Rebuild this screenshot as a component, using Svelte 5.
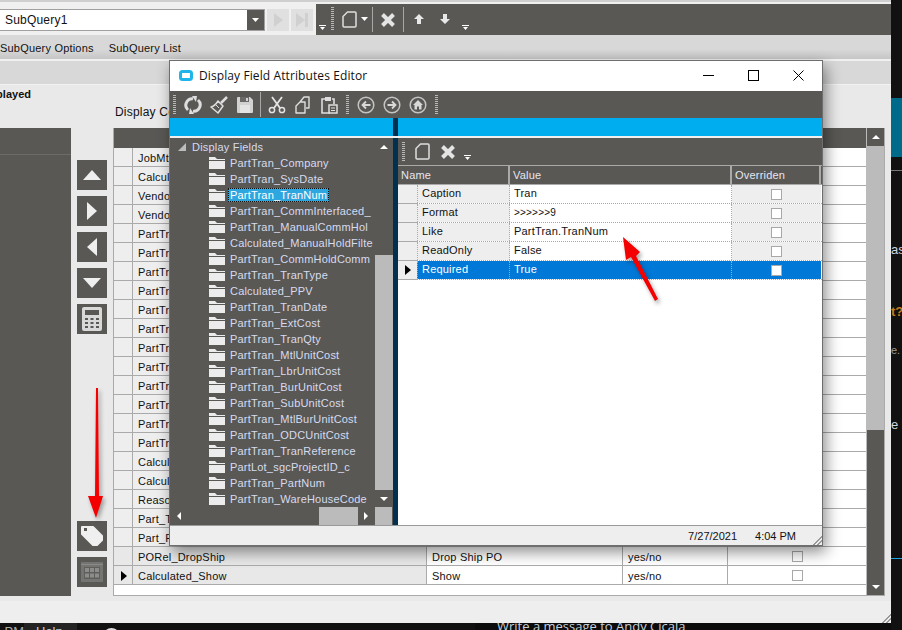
<script>
  const mainRows = ['JobMtl_JobNum','Calculated_Total','Vendor_VendorID','Vendor_Name','PartTran_PartNum','PartTran_Company','PartTran_TranNum','PartTran_TranDate','PartTran_TranType','PartTran_TranQty','PartTran_ExtCost','PartTran_SysDate','PartTran_MtlUnitCost','PartTran_LbrUnitCost','PartTran_BurUnitCost','PartTran_SubUnitCost','Calculated_PPV','Calculated_Filter','Reason_Description','Part_TypeCode','Part_PartDescription'];
  const fields = ['PartTran_Company','PartTran_SysDate','PartTran_TranNum','PartTran_CommInterfaced_','PartTran_ManualCommHol','Calculated_ManualHoldFilte','PartTran_CommHoldComm','PartTran_TranType','Calculated_PPV','PartTran_TranDate','PartTran_ExtCost','PartTran_TranQty','PartTran_MtlUnitCost','PartTran_LbrUnitCost','PartTran_BurUnitCost','PartTran_SubUnitCost','PartTran_MtlBurUnitCost','PartTran_ODCUnitCost','PartTran_TranReference','PartLot_sgcProjectID_c','PartTran_PartNum','PartTran_WareHouseCode'];
  const attrs = [['Caption','Tran'],['Format','>>>>>>9'],['Like','PartTran.TranNum'],['ReadOnly','False'],['Required','True']];
</script>

{#snippet doc()}
  <svg class="block" width="15" height="17" viewBox="0 0 15 17"><path d="M5.500 1H13Q14 1 14 2V15Q14 16 13 16H2Q1 16 1 15V5.500Z" fill="none" stroke="#dedede" stroke-width="1.500" stroke-linejoin="round"/></svg>
{/snippet}
{#snippet cross()}
  <svg class="block" width="16" height="16" viewBox="0 0 16 16"><path d="M2.500 2.500L13.500 13.500M13.500 2.500L2.500 13.500" stroke="#e4e4e4" stroke-width="4"/></svg>
{/snippet}
{#snippet chevron()}
  <svg class="block" width="7" height="6" viewBox="0 0 7 6"><path d="M0 0H7V1H0ZM1 2H6L3.500 5Z" fill="#fff"/></svg>
{/snippet}
{#snippet folder()}
  <svg class="folder" width="16" height="12" viewBox="0 0 16 12"><path d="M0 0H6L8 2H16V3H0ZM0 4H16V12H0Z" fill="#ececec"/></svg>
{/snippet}

<div class="page">
  <div class="app">
    <div class="strip"></div>
    <div class="toolbar">
      <div class="light">
        <div class="combo"><span>SubQuery1</span><i class="drop"><svg width="7" height="4" viewBox="0 0 7 4"><path d="M0 0H7L3.500 4Z" fill="#fff"/></svg></i></div>
        <div class="dis"><svg width="9" height="14" viewBox="0 0 9 14"><path d="M0 0L9 7L0 14Z" fill="#d0d0d0"/></svg></div>
        <div class="dis"><svg width="12" height="14" viewBox="0 0 12 14"><path d="M0 0L9 7L0 14ZM9 0H12V14H9Z" fill="#d0d0d0"/></svg></div>
      </div>
      <div class="dark">
        <div class="c1">{@render chevron()}</div>
        <i class="grip tg"></i>
        <div class="t1">{@render doc()}</div>
        <svg class="t2" width="7" height="4" viewBox="0 0 7 4"><path d="M0 0H7L3.500 4Z" fill="#fff"/></svg>
        <i class="sep s-a"></i>
        <div class="t3">{@render cross()}</div>
        <i class="sep s-b"></i>
        <svg class="t4" width="10" height="10" viewBox="0 0 10 10"><path d="M5 0L10 5H7V10H3V5H0Z" fill="#e8e8e8"/></svg>
        <svg class="t5" width="10" height="10" viewBox="0 0 10 10"><path d="M5 10L10 5H7V0H3V5H0Z" fill="#e8e8e8"/></svg>
        <div class="c2">{@render chevron()}</div>
      </div>
    </div>
    <div class="menu"><span>SubQuery Options</span><span>SubQuery List</span></div>
    <div class="band"></div>
    <div class="content">
      <div class="played">Displayed</div>
      <div class="columns">
        <div class="leftpane"><div class="lefthead"></div></div>
        <div class="buttons">
          <div class="btngroup">
            <button aria-label="Up"><svg width="20" height="12" viewBox="0 0 20 12"><path d="M10 1L19 11H1Z" fill="#efefef"/></svg></button>
            <button aria-label="Right"><svg width="12" height="20" viewBox="0 0 12 20"><path d="M1 1L11 10L1 19Z" fill="#efefef"/></svg></button>
            <button aria-label="Left"><svg width="12" height="20" viewBox="0 0 12 20"><path d="M11 1L1 10L11 19Z" fill="#efefef"/></svg></button>
            <button aria-label="Down"><svg width="20" height="12" viewBox="0 0 20 12"><path d="M10 11L19 1H1Z" fill="#efefef"/></svg></button>
            <button aria-label="Calculator"><svg width="20" height="24" viewBox="0 0 20 24"><rect width="20" height="24" rx="2" fill="#d9d9d9"/><rect x="3" y="3" width="14" height="5" fill="#595855"/><path d="M3 11h3v2H3zM8.500 11h3v2h-3zM14 11h3v2h-3zM3 15h3v2H3zM8.500 15h3v2h-3zM14 15h3v2h-3zM3 19h3v2H3zM8.500 19h3v2h-3zM14 19h3v2h-3z" fill="#595855"/></svg></button>
          </div>
          <div class="btngroup">
            <button aria-label="Tag"><svg width="24" height="22" viewBox="0 0 24 22"><path d="M2 2H13L22 11V15L17 20H13L2 9Z" fill="#efefef" stroke="#efefef" stroke-width="2" stroke-linejoin="round"/><rect x="4" y="3" width="3" height="3" fill="#595855"/></svg></button>
            <button aria-label="Calendar"><svg width="22" height="20" viewBox="0 0 22 20"><rect width="22" height="20" fill="#747472"/><rect y="2" width="22" height="1" fill="#8a8a88"/><rect x="3" y="5" width="16" height="12" fill="#5f5e5b"/><path d="M4 6h4v4H4zM9 6h4v4H9zM14 6h4v4h-4zM4 11.500h4v4H4zM9 11.500h4v4H9zM14 11.500h4v4h-4z" fill="#8c8c8a"/></svg></button>
          </div>
        </div>
        <div class="gridwrap">
          <div class="gridtitle">Display Columns</div>
          <div class="grid">
            <div class="gridbody">
              <div class="ghead"></div>
              {#each mainRows as r}
                <div class="grow"><i></i><b>{r}</b><span></span><span></span><span></span></div>
              {/each}
              <div class="grow tail"><i></i><b>PORel_DropShip</b><span>Drop Ship PO</span><span>yes/no</span><span class="ck"><em></em></span></div>
              <div class="grow tail"><i class="cur"><svg width="6" height="10" viewBox="0 0 6 10"><path d="M0 0L6 5L0 10Z" fill="#000"/></svg></i><b>Calculated_Show</b><span>Show</span><span>yes/no</span><span class="ck"><em></em></span></div>
            </div>
            <div class="vscroll">
              <div class="sb"><svg width="8" height="4" viewBox="0 0 8 4"><path d="M4 0L8 4H0Z" fill="#fff"/></svg></div>
              <div class="thumb"></div>
              <div class="rest"><svg width="8" height="4" viewBox="0 0 8 4"><path d="M4 4L8 0H0Z" fill="#fff"/></svg></div>
            </div>
          </div>
        </div>
      </div>
    </div>
    <div class="status"><i class="resize"></i></div>
  </div>

  <div class="side">
    <div class="s1"></div>
    <div class="s2"></div>
    <div class="s3"></div>
    <div class="s4">as</div>
    <div class="s5">t?</div>
    <div class="s6">e.</div>
    <div class="s7">e</div>
    <div class="s8"></div>
  </div>

  <div class="footer">
    <span class="om">PM</span>
    <span class="tab">Help</span>
    <i class="avatar"></i>
    <div class="msgbox"><span>Write a message to Andy Cicala</span></div>
  </div>

  <section class="dialog">
    <header class="dtitle">
      <svg width="14" height="11" viewBox="0 0 14 11"><rect x="1.500" y="1.500" width="11" height="8" rx="2" fill="#fff" stroke="#1fb4ea" stroke-width="3"/></svg>
      <span>Display Field Attributes Editor</span>
      <div class="wc">
        <svg class="block" width="11" height="11" viewBox="0 0 11 11"><path d="M0 5.500H11" stroke="#000"/></svg>
        <svg class="block" width="11" height="11" viewBox="0 0 11 11"><rect x=".5" y=".5" width="10" height="10" fill="none" stroke="#000"/></svg>
        <svg class="block" width="11" height="11" viewBox="0 0 11 11"><path d="M.5 .5L10.500 10.500M10.500 .5L.5 10.500" stroke="#000"/></svg>
      </div>
    </header>
    <div class="dtools">
      <i class="grip"></i>
      <svg class="ic" width="18" height="18" viewBox="0 0 18 18"><path d="M4 14A6.500 6.500 0 0 1 9 2.700" fill="none" stroke="#dedede" stroke-width="3"/><path d="M14 4A6.500 6.500 0 0 1 9 15.300" fill="none" stroke="#dedede" stroke-width="3"/><path d="M8 0L13 0L12 6ZM10 18L5 18L6 12Z" fill="#dedede"/></svg>
      <svg class="ic" width="18" height="18" viewBox="0 0 18 18"><path d="M17 1L11 7" stroke="#dedede" stroke-width="2.500"/><path d="M8 5L13 10L8 17L1 11Q5 10 8 5Z" fill="none" stroke="#dedede" stroke-width="1.500" stroke-linejoin="round"/><path d="M6 9L9 12" stroke="#dedede"/></svg>
      <svg class="ic" width="18" height="18" viewBox="0 0 18 18"><path d="M1 2Q1 1 2 1H14L17 4V16Q17 17 16 17H2Q1 17 1 16Z" fill="#d2d2d2"/><rect x="4" y="1" width="9" height="5" fill="#6a6967"/><rect x="10" y="2" width="2" height="3" fill="#d2d2d2"/><rect x="4" y="9" width="10" height="8" fill="#e4e4e4"/></svg>
      <i class="sep"></i>
      <svg class="ic cut" width="18" height="18" viewBox="0 0 18 18"><path d="M4 1L12 12M14 1L6 12" stroke="#e4e4e4" stroke-width="1.800"/><circle cx="4" cy="14" r="2.600" fill="none" stroke="#e4e4e4" stroke-width="1.500"/><circle cx="14" cy="14" r="2.600" fill="none" stroke="#e4e4e4" stroke-width="1.500"/></svg>
      <svg class="ic" width="18" height="18" viewBox="-1 0 18 18"><path d="M5 6L9 1H14V12H11M1 10L5 6H10V17H1Z" fill="none" stroke="#dedede" stroke-width="1.400" stroke-linejoin="round"/></svg>
      <svg class="ic" width="18" height="18" viewBox="-1 0 18 18"><path d="M5 3H1V17H9M11 3H13V8" fill="none" stroke="#dedede" stroke-width="1.600"/><rect x="4" y="1" width="6" height="4" fill="#dedede"/><rect x="8" y="9" width="8" height="8" fill="none" stroke="#dedede" stroke-width="1.500"/><path d="M10 12H14M10 14.500H14" stroke="#dedede"/></svg>
      <i class="grip g2"></i>
      <svg class="ic" width="18" height="18" viewBox="0 0 18 18"><circle cx="9" cy="9" r="7.800" fill="none" stroke="#c4c4c4" stroke-width="1.500"/><path d="M13.500 9H6M9 5.500L5.500 9L9 12.500" fill="none" stroke="#d8d8d8" stroke-width="1.800"/></svg>
      <svg class="ic" width="18" height="18" viewBox="0 0 18 18"><circle cx="9" cy="9" r="7.800" fill="none" stroke="#c4c4c4" stroke-width="1.500"/><path d="M4.500 9H12M9 5.500L12.500 9L9 12.500" fill="none" stroke="#d8d8d8" stroke-width="1.800"/></svg>
      <svg class="ic" width="18" height="18" viewBox="0 0 18 18"><circle cx="9" cy="9" r="7.800" fill="none" stroke="#c4c4c4" stroke-width="1.500"/><path d="M9 4L14 9H12.500V13.500H10V10.500H8V13.500H5.500V9H4Z" fill="#d8d8d8"/></svg>
      <i class="grip g3"></i>
    </div>
    <div class="dblue"><i></i></div>
    <div class="dmain">
      <div class="tree">
        <div class="treemain">
          <div class="treelist">
            <div class="troot">
              <svg width="8" height="8" viewBox="0 0 8 8"><path d="M8 0V8H0Z" fill="#bdbdbd"/></svg>
              <span>Display Fields</span>
            </div>
            {#each fields as f, i}
              <div class="titem">{@render folder()}<span class:sel={i === 2}>{f}</span></div>
            {/each}
          </div>
          <div class="tvs">
            <div class="ta"><svg width="8" height="4" viewBox="0 0 8 4"><path d="M4 0L8 4H0Z" fill="#fff"/></svg></div>
            <div class="tgap"></div>
            <div class="tthumb"></div>
            <div class="ta"><svg width="8" height="4" viewBox="0 0 8 4"><path d="M4 4L8 0H0Z" fill="#fff"/></svg></div>
          </div>
        </div>
        <div class="ths">
          <svg class="la" width="4" height="8" viewBox="0 0 4 8"><path d="M0 4L4 0V8Z" fill="#fff"/></svg>
          <div class="hthumb"></div>
          <svg class="ra" width="4" height="8" viewBox="0 0 4 8"><path d="M4 4L0 0V8Z" fill="#fff"/></svg>
          <div class="corner"></div>
        </div>
      </div>
      <div class="split"></div>
      <div class="props">
        <div class="ptools">
          <i class="grip"></i>
          <div class="pdoc">{@render doc()}</div>
          <div class="px">{@render cross()}</div>
          <div class="pc">{@render chevron()}</div>
        </div>
        <div class="phead"><span class="hn">Name</span><span>Value</span><span>Overriden</span></div>
        {#each attrs as a, i}
          <div class="prow" class:active={i === 4}>
            <i>{#if i === 4}<svg width="6" height="10" viewBox="0 0 6 10"><path d="M0 0L6 5L0 10Z" fill="#000"/></svg>{/if}</i>
            <b>{a[0]}</b>
            <span class:fmt={i === 1}>{a[1]}</span>
            <u><em></em></u>
          </div>
        {/each}
      </div>
    </div>
    <footer class="dstatus"><span>7/27/2021</span><span>4:04 PM</span><i class="resize"></i></footer>
  </section>

  <svg class="arrows" width="902" height="630" viewBox="0 0 902 630">
    <path d="M96 388H98L99 496H103L96 518L88 496H95Z" fill="#f40000"/>
    <path d="M655 301L658 299L636 256L640 252L623 237L626 260L631 257Z" fill="#f40000"/>
  </svg>
</div>

<style>
  :global(body) { margin: 0; }
  * { box-sizing: border-box; }
  i, em, u, b { font-style: normal; text-decoration: none; font-weight: normal; }
  .block { display: block; }
  .page { width: 902px; height: 630px; position: relative; overflow: hidden; background: #111; font: 11px "Liberation Sans", Arial, sans-serif; color: #111; letter-spacing: .2px; display: grid; grid-template-columns: 891px 11px; grid-template-rows: 623px 7px; }
  .app { display: flex; flex-direction: column; background: #eee; }
  .strip { height: 4px; background: linear-gradient(#cfcfcf 50%, #f0f0f0 50%); }
  .toolbar { height: 31px; display: flex; }
  .light { width: 316px; background: #f0f0f0; display: flex; align-items: flex-start; padding-top: 5px; gap: 2px; }
  .combo { width: 265px; height: 22px; background: #fff; border: 1px solid #a0a0a0; border-left: 0; display: flex; align-items: center; justify-content: space-between; font-size: 12px; padding-left: 5px; }
  .combo span { padding-top: 1px; }
  .drop { width: 17px; height: 20px; background: #595855; display: flex; align-items: center; justify-content: center; }
  .dis { width: 22px; height: 22px; background: #e0e0e0; display: flex; align-items: center; justify-content: center; }
  .dark { flex: 1; background: #595855; display: flex; align-items: center; }
  .grip { display: block; flex: none; width: 3px; height: 22px; background: repeating-linear-gradient(#b8b8b8 0 1px, transparent 1px 2px); }
  .sep { display: block; flex: none; width: 1px; height: 25px; background: #a8a8a8; }
  .c1 { margin: 17px 0 0 3px; }
  .tg { margin-left: 5px; height: 24px; }
  .t1 { margin: 1px 0 0 8px; }
  .t2 { margin-left: 4px; }
  .s-a { margin-left: 4px; }
  .t3 { margin: 1px 0 0 7px; }
  .s-b { margin-left: 7px; }
  .t4 { margin-left: 10px; }
  .t5 { margin-left: 16px; }
  .c2 { margin: 17px 0 0 12px; }
  .menu { height: 24px; background: linear-gradient(#d8d8d8 60%, #c6c6c6); display: flex; align-items: center; gap: 15px; padding-top: 2px; }
  .band { height: 26px; border-top: 2px solid #f0f0f0; background: #d8d8d8; }
  .content { height: 516px; background: #e9e9e9; display: flex; flex-direction: column; border-top: 1px solid #f2f2f2; }
  .played { height: 43px; padding-top: 3px; margin-left: -21px; font-weight: bold; letter-spacing: 0; }
  .columns { display: flex; height: 468px; }
  .leftpane { width: 71px; background: #595855; }
  .lefthead { height: 27px; border-bottom: 1px solid #6b6b69; }
  .buttons { width: 42px; padding: 32px 0 9px 6px; display: flex; flex-direction: column; justify-content: space-between; }
  .btngroup { display: flex; flex-direction: column; gap: 6px; }
  .buttons button { width: 30px; height: 30px; padding: 0; border: 0; background: #595855; display: flex; align-items: center; justify-content: center; }
  .gridwrap { width: 772px; position: relative; }
  .gridtitle { position: absolute; left: 2px; top: -23px; font-size: 12px; }
  .grid { width: 772px; height: 468px; border: 1px solid #aaa; border-top: 0; display: flex; background: #fff; }
  .gridbody { flex: 1; min-width: 0; }
  .ghead { height: 20px; background: #595855; }
  .grow { display: grid; grid-template-columns: 19px 294px 196px 105px 138px; height: 19px; border-bottom: 1px solid #aaa; }
  .grow > * { display: flex; align-items: center; border-right: 1px solid #aaa; padding: 1px 0 0 5px; overflow: hidden; white-space: nowrap; }
  .grow > i, .grow > b { background: #eee; }
  .grow > *:last-child { border-right: 0; }
  .grow.tail > i, .grow.tail > b { background: #e8e8e8; }
  .cur { padding-left: 7px !important; }
  .ck { justify-content: center; padding-left: 0 !important; }
  em { display: block; width: 11px; height: 11px; background: #fff; border: 1px solid #a8a8a8; }
  .vscroll { width: 18px; display: flex; flex-direction: column; background: #bbb; border-left: 1px solid #bbb; }
  .sb { height: 18px; background: #595855; display: flex; align-items: center; justify-content: center; }
  .thumb { height: 284px; background: #bbb; }
  .rest { flex: 1; background: #595855; display: flex; align-items: flex-end; justify-content: center; padding-bottom: 6px; }
  .status { height: 26px; border-top: 4px solid #e9e9e9; background: #eee; position: relative; }
  .resize { position: absolute; right: 0; bottom: 0; width: 10px; height: 10px; background: repeating-linear-gradient(135deg, transparent 0 1.500px, #999 1.500px 3px); clip-path: polygon(100% 0, 100% 100%, 0 100%); }
  .side { grid-column: 2; grid-row: 1 / 3; display: flex; flex-direction: column; font-size: 13px; line-height: 16px; color: #cfd6dd; letter-spacing: 0; white-space: nowrap; }
  .side > div { flex: none; }
  .s1 { height: 98px; }
  .s2 { height: 59px; background: #006a8a; }
  .s3 { height: 14px; border-bottom: 1px solid #777; }
  .s4 { height: 87px; padding-top: 71px; }
  .s5 { height: 62px; padding-top: 46px; color: #c87a1c; font-weight: bold; }
  .s6 { height: 38px; padding-top: 22px; color: #9a9a9a; font-size: 11px; }
  .s7 { height: 75px; padding-top: 59px; }
  .s8 { height: 72px; border-top: 1px solid #1aa8e0; margin-top: 125px; }
  .footer { grid-column: 1; grid-row: 2; display: flex; overflow: hidden; color: #c8d0da; font-size: 13px; line-height: 16px; letter-spacing: 0; white-space: nowrap; }
  .om { width: 24px; overflow: hidden; direction: rtl; margin-top: 1px; color: #aaa; flex: none; }
  .tab { width: 53px; flex: none; background: #232323; padding: 1px 0 0 12px; }
  .avatar { flex: none; display: block; width: 17px; height: 17px; margin: 5px 0 0 26px; border-radius: 50%; background: #ddd; }
  .msgbox { flex: none; width: 416px; height: 7px; margin-left: 355px; padding-left: 22px; background: #0c0c0c; font-family: "Open Sans", sans-serif; }
  .msgbox span { display: block; margin-top: -5px; }

  .dialog { position: absolute; left: 169px; top: 60px; width: 654px; height: 486px; border: 1px solid #6e6e6e; background: #fff; box-shadow: 3px 6px 14px rgba(0,0,0,.45); display: flex; flex-direction: column; }
  .dtitle { height: 30px; flex: none; display: flex; align-items: center; padding: 0 0 2px 9px; font-size: 12px; letter-spacing: .1px; background: #fff; font-family: "Open Sans", "Liberation Sans", sans-serif; }
  .dtitle span { margin-left: 6px; flex: 1; }
  .wc { display: flex; gap: 34px; padding-right: 18px; }
  .dtools { height: 27px; flex: none; background: #595855; display: flex; align-items: center; padding-left: 3px; }
  .dtools .grip { height: 20px; margin-right: 8px; }
  .dtools .ic { margin-right: 8px; flex: none; }
  .dtools .sep { margin: 0 7px 0 -2px; }
  .dtools .g2 { margin-left: 0; }
  .dblue { height: 20px; flex: none; border-bottom: 2px solid #efefef; background: #00adef; padding-left: 223px; }
  .dblue i { display: block; width: 5px; height: 18px; background: #02304f; }
  .dmain { flex: 1; display: flex; min-height: 0; }
  .tree { width: 223px; background: #595855; display: flex; flex-direction: column; }
  .treemain { height: 369px; display: flex; }
  .treelist { width: 205px; overflow: hidden; color: #d7dbef; }
  .troot { height: 17px; display: flex; align-items: center; padding: 1px 0 0 8px; gap: 6px; }
  .titem { height: 16px; display: flex; align-items: center; padding-left: 39px; white-space: nowrap; }
  .folder { flex: none; margin-right: 3px; }
  .titem span { padding: 1px 2px; }
  .sel { background: #2ea6df; color: #fff; outline: 1px dotted #111; outline-offset: -1px; }
  .tvs { width: 18px; display: flex; flex-direction: column; }
  .ta { height: 17px; display: flex; align-items: center; justify-content: center; }
  .tgap { height: 100px; }
  .tthumb { height: 235px; background: #bbb; }
  .ths { height: 18px; display: flex; align-items: center; }
  .la { margin-left: 7px; }
  .hthumb { width: 39px; height: 18px; background: #bbb; margin-left: 138px; }
  .ra { margin-left: 6px; }
  .corner { width: 17px; height: 18px; background: #bbb; margin-left: 7px; }
  .split { width: 5px; background: #02304f; }
  .props { flex: 1; background: #fff; }
  .ptools { height: 27px; background: #595855; display: flex; align-items: center; padding-left: 4px; }
  .ptools .grip { height: 20px; }
  .pdoc { margin-left: 10px; }
  .px { margin-left: 10px; }
  .pc { margin: 13px 0 0 8px; }
  .phead { height: 20px; display: grid; grid-template-columns: 112px 222px 89px; background: #595855; color: #e6e6f0; border-top: 1px solid #aaa; border-bottom: 1px solid #aaa; }
  .phead span { display: flex; align-items: center; padding-left: 3px; border-right: 2px solid #aaa; overflow: hidden; }
  .prow { height: 19px; display: grid; grid-template-columns: 19px 93px 222px 89px; border-bottom: 1px dotted #aaa; }
  .prow > * { display: flex; align-items: center; padding: 0 0 2px 4px; background: #eee; border-right: 1px dotted #aaa; }
  .prow > i { border-right: 0; border-bottom: 1px solid #aaa; margin-bottom: -1px; padding: 0 0 0 7px; }
  .prow > b { border-left: 1px dotted #aaa; }
  .prow > span { background: #fff; }
  .prow > u { justify-content: center; padding: 0; border-right: 0; }
  .fmt { font-size: 10px; }
  .active > b, .active > span, .active > u { background: #0078d7; color: #fff; }
  .dstatus { height: 20px; flex: none; background: #eee; border-top: 1px solid #999; position: relative; display: flex; align-items: center; justify-content: flex-end; gap: 18px; padding-right: 26px; letter-spacing: 0; }
  .arrows { position: absolute; left: 0; top: 0; pointer-events: none; filter: drop-shadow(2px 3px 2px rgba(0,0,0,.35)); }
</style>
